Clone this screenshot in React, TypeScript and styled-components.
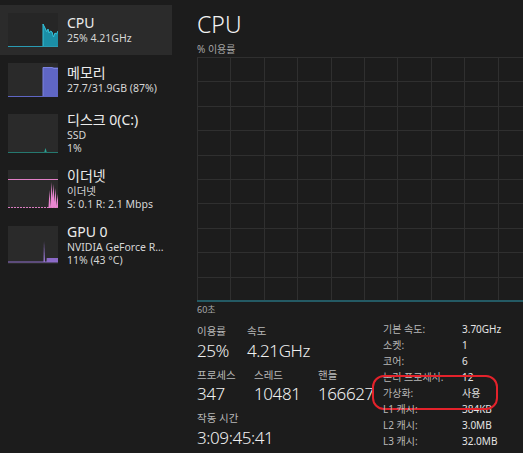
import React from 'react';
import styled, { createGlobalStyle } from 'styled-components';

const GlobalStyle = createGlobalStyle`
  html, body { margin: 0; padding: 0; background: #1c1c1c; }
  body {
    font-family: "Noto Sans", "Noto Sans CJK KR", sans-serif;
    color: #e6e6e6;
    overflow: hidden;
  }
`;

const Window = styled.div`
  display: flex;
  width: 523px;
  height: 453px;
  background: #1c1c1c;
  overflow: hidden;
`;

const Sidebar = styled.nav`
  width: 172px;
  flex-shrink: 0;
  padding-top: 5px;
  display: flex;
  flex-direction: column;
`;

const NavItem = styled.div<{ $active?: boolean; $tall?: boolean }>`
  display: flex;
  align-items: center;
  gap: 9px;
  padding-left: 8px;
  height: ${p => (p.$tall ? 56 : 50)}px;
  background: ${p => (p.$active ? '#2b2b2b' : 'transparent')};
`;

const Thumb = styled.svg`
  display: block;
  flex-shrink: 0;
  background: #2a2a2a;
`;

const NavText = styled.div`
  display: flex;
  flex-direction: column;
  min-width: 0;
`;

const NavTitle = styled.div`
  font-size: 14px;
  line-height: 18px;
  color: #ececec;
  white-space: nowrap;
`;

const NavSub = styled.div`
  font-size: 10.5px;
  line-height: 13.5px;
  color: #d6d6d6;
  white-space: nowrap;
`;

const Main = styled.main`
  flex: 1;
  min-width: 0;
  padding-left: 25px;
  display: flex;
  flex-direction: column;
  overflow: hidden;
`;

const Title = styled.h1`
  margin: 10px 0 0;
  font-size: 23px;
  line-height: 28px;
  font-weight: 300;
  color: #f2f2f2;
`;

const ChartCaption = styled.div`
  margin-top: 4px;
  font-size: 10px;
  line-height: 14px;
  color: #a8a8a8;
`;

const ChartBox = styled.div`
  margin-top: 1px;
  width: 340px;
  height: 245px;
  flex-shrink: 0;
`;

const AxisLabel = styled.div`
  margin-top: 2px;
  font-size: 9px;
  line-height: 12px;
  color: #a8a8a8;
`;

const StatsArea = styled.div`
  margin-top: 6px;
  display: flex;
`;

const LeftStats = styled.div`
  width: 186px;
  flex-shrink: 0;
  display: flex;
  flex-direction: column;
  gap: 5px;
  padding-top: 2px;
`;

const StatRow = styled.div`
  display: flex;
`;

const StatGroup = styled.div<{ $w?: number }>`
  width: ${p => (p.$w ? `${p.$w}px` : 'auto')};
  flex-shrink: 0;
  display: flex;
  flex-direction: column;
`;

const StatLabel = styled.div`
  font-size: 10.5px;
  line-height: 14.5px;
  color: #b8b8b8;
  white-space: nowrap;
`;

const StatValue = styled.div`
  font-size: 17px;
  line-height: 24px;
  letter-spacing: -0.4px;
  font-weight: 300;
  color: #f0f0f0;
  white-space: nowrap;
`;

const SpecTable = styled.div`
  display: grid;
  grid-template-columns: 79px auto;
  font-size: 10px;
  line-height: 15.3px;
`;

const SpecKey = styled.div`
  position: relative;
  color: #b8b8b8;
  white-space: nowrap;
`;

const SpecVal = styled.div`
  color: #e4e4e4;
  white-space: nowrap;
`;

const Highlight = styled.div`
  position: absolute;
  left: -11px;
  top: -11px;
  width: 122px;
  height: 31px;
  border: 2px solid #e3222b;
  border-radius: 12px;
  pointer-events: none;
`;

function ChartGrid() {
  const w = 334;
  const h = 245;
  const cols = 10;
  const rows = 10;
  const cw = 33.4;
  const rh = 24.4;
  const lines: React.ReactNode[] = [];
  for (let i = 0; i <= cols; i++) {
    const x = 0.5 + Math.round(i * cw);
    lines.push(<line key={`v${i}`} x1={x} y1={0} x2={x} y2={h} stroke="#2f2f2f" strokeWidth={1} />);
  }
  for (let j = 0; j < rows; j++) {
    const y = 0.5 + Math.round(j * rh);
    lines.push(<line key={`h${j}`} x1={0} y1={y} x2={w + 6} y2={y} stroke="#2f2f2f" strokeWidth={1} />);
  }
  return (
    <svg width={w + 6} height={h} style={{ display: 'block' }}>
      {lines}
      <rect x={0} y={h - 2} width={w + 6} height={2} fill="#245a64" />
    </svg>
  );
}

const cpuThumb = (
  <Thumb width={50} height={34} viewBox="0 0 50 34" style={{ background: '#262626' }}>
    <path
      d="M0 33 L35 33 L35 11 L37 15 L38.7 18.7 L40 16 L41 20 L42.5 18 L44 19 L45.5 24 L47 20 L48.5 21 L50 18 L50 34 L0 34 Z"
      fill="#1b8ea6"
    />
    <path
      d="M35 33 L35 11 L37 15 L38.7 18.7 L40 16 L41 20 L42.5 18 L44 19 L45.5 24 L47 20 L48.5 21 L50 18"
      fill="none"
      stroke="#35c4dc"
      strokeWidth={1}
    />
    <line x1={0} y1={33.5} x2={50} y2={33.5} stroke="#2a9bb3" strokeWidth={1} />
  </Thumb>
);

const memThumb = (
  <Thumb width={50} height={34} viewBox="0 0 50 34">
    <rect x={35} y={4.5} width={15} height={30} fill="#5f66c4" />
    <path d="M35 34 L35 4.5 L44 4.5 L46 5.5 L50 5.5" fill="none" stroke="#7c83e0" strokeWidth={1} />
    <line x1={0} y1={33.5} x2={50} y2={33.5} stroke="#5f66c4" strokeWidth={1} />
  </Thumb>
);

const diskThumb = (
  <Thumb width={50} height={39} viewBox="0 0 50 39">
    <path d="M36 39 L37.5 34 L39 39 Z" fill="#2aa393" />
    <line x1={0} y1={38.5} x2={50} y2={38.5} stroke="#25786f" strokeWidth={1} />
  </Thumb>
);

const ethThumb = (
  <Thumb width={50} height={38} viewBox="0 0 50 38">
    <line x1={0} y1={9.5} x2={50} y2={9.5} stroke="#e07fc6" strokeWidth={1.2} />
    <path
      d="M40.5 37 L41.5 20 L42.5 37 L43.5 12 L44.5 28 L45.5 14 L46.5 32 L47.5 18 L48.5 36 L49.5 24 L50 30 L50 38 L40.5 38 Z"
      fill="#e886d0"
    />
    <line x1={0} y1={37.5} x2={50} y2={37.5} stroke="#d97cc0" strokeWidth={1} strokeDasharray="2 1" />
  </Thumb>
);

const gpuThumb = (
  <Thumb width={50} height={38} viewBox="0 0 50 38">
    <path d="M35.5 36 L36 15 L37 36 Z" fill="#9d7ad8" />
    <path d="M37 36 L38.5 36 L38.7 32 L50 32 L50 36 Z" fill="#8a69c6" />
    <line x1={0} y1={36} x2={50} y2={36} stroke="#8f6fcc" strokeWidth={1} />
  </Thumb>
);

export default function App() {
  return (
    <>
      <GlobalStyle />
      <Window>
        <Sidebar>
          <NavItem $active>
            {cpuThumb}
            <NavText>
              <NavTitle>CPU</NavTitle>
              <NavSub>25% 4.21GHz</NavSub>
            </NavText>
          </NavItem>
          <NavItem>
            {memThumb}
            <NavText>
              <NavTitle>메모리</NavTitle>
              <NavSub>27.7/31.9GB (87%)</NavSub>
            </NavText>
          </NavItem>
          <NavItem $tall>
            {diskThumb}
            <NavText>
              <NavTitle>디스크 0(C:)</NavTitle>
              <NavSub>SSD</NavSub>
              <NavSub>1%</NavSub>
            </NavText>
          </NavItem>
          <NavItem $tall>
            {ethThumb}
            <NavText>
              <NavTitle>이더넷</NavTitle>
              <NavSub>이더넷</NavSub>
              <NavSub>S: 0.1 R: 2.1 Mbps</NavSub>
            </NavText>
          </NavItem>
          <NavItem $tall>
            {gpuThumb}
            <NavText>
              <NavTitle>GPU 0</NavTitle>
              <NavSub>NVIDIA GeForce R...</NavSub>
              <NavSub>11% (43 °C)</NavSub>
            </NavText>
          </NavItem>
        </Sidebar>
        <Main>
          <Title>CPU</Title>
          <ChartCaption>% 이용률</ChartCaption>
          <ChartBox>
            <ChartGrid />
          </ChartBox>
          <AxisLabel>60초</AxisLabel>
          <StatsArea>
            <LeftStats>
              <StatRow>
                <StatGroup $w={50}>
                  <StatLabel>이용률</StatLabel>
                  <StatValue>25%</StatValue>
                </StatGroup>
                <StatGroup>
                  <StatLabel>속도</StatLabel>
                  <StatValue>4.21GHz</StatValue>
                </StatGroup>
              </StatRow>
              <StatRow>
                <StatGroup $w={57}>
                  <StatLabel>프로세스</StatLabel>
                  <StatValue>347</StatValue>
                </StatGroup>
                <StatGroup $w={64}>
                  <StatLabel>스레드</StatLabel>
                  <StatValue>10481</StatValue>
                </StatGroup>
                <StatGroup>
                  <StatLabel>핸들</StatLabel>
                  <StatValue>166627</StatValue>
                </StatGroup>
              </StatRow>
              <StatRow>
                <StatGroup>
                  <StatLabel>작동 시간</StatLabel>
                  <StatValue>3:09:45:41</StatValue>
                </StatGroup>
              </StatRow>
            </LeftStats>
            <SpecTable>
              <SpecKey>기본 속도:</SpecKey>
              <SpecVal>3.70GHz</SpecVal>
              <SpecKey>소켓:</SpecKey>
              <SpecVal>1</SpecVal>
              <SpecKey>코어:</SpecKey>
              <SpecVal>6</SpecVal>
              <SpecKey>논리 프로세서:</SpecKey>
              <SpecVal>12</SpecVal>
              <SpecKey>
                가상화:
                <Highlight />
              </SpecKey>
              <SpecVal>사용</SpecVal>
              <SpecKey>L1 캐시:</SpecKey>
              <SpecVal>384KB</SpecVal>
              <SpecKey>L2 캐시:</SpecKey>
              <SpecVal>3.0MB</SpecVal>
              <SpecKey>L3 캐시:</SpecKey>
              <SpecVal>32.0MB</SpecVal>
            </SpecTable>
          </StatsArea>
        </Main>
      </Window>
    </>
  );
}
